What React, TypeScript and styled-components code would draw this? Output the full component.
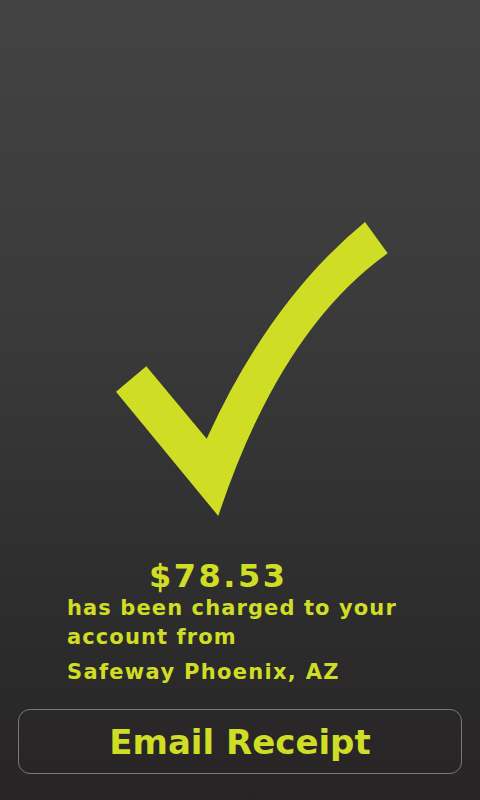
import React from "react";
import styled, { createGlobalStyle } from "styled-components";

const Global = createGlobalStyle`
  html, body { margin: 0; padding: 0; }
  body { background: #262425; }
`;

const Page = styled.div`
  width: 480px;
  height: 800px;
  box-sizing: border-box;
  padding-top: 222px;
  display: flex;
  flex-direction: column;
  background: linear-gradient(180deg, #434343 0%, #3a3a3a 40%, #262425 100%);
  color: #cfdd24;
`;

const CheckIcon = styled.svg`
  display: block;
  width: 272px;
  height: 294px;
  margin-left: 116px;
  flex: none;
`;

const Amount = styled.div`
  margin: 42px 0 0 149px;
  font-family: "DejaVu Sans", "Liberation Sans", sans-serif;
  font-weight: bold;
  font-size: 32px;
  line-height: 36px;
  letter-spacing: 2.5px;
`;

const Details = styled.div`
  margin-left: 67px;
  font-family: "DejaVu Sans", "Liberation Sans", sans-serif;
  font-weight: bold;
  font-size: 21px;
  line-height: 29px;
  letter-spacing: 1.1px;
`;

const Merchant = styled.div`
  margin: 6px 0 0 67px;
  font-family: "DejaVu Sans", "Liberation Sans", sans-serif;
  font-weight: bold;
  font-size: 21px;
  line-height: 29px;
  letter-spacing: 1.3px;
`;

const Button = styled.button`
  margin: 22px 18px 0 18px;
  height: 65px;
  box-sizing: border-box;
  border: 1px solid #7a7879;
  border-radius: 12px;
  background: transparent;
  color: #cfdd24;
  font-family: "DejaVu Sans", "Liberation Sans", sans-serif;
  font-weight: bold;
  font-size: 34px;
  display: flex;
  align-items: center;
  justify-content: center;
  padding: 0;
`;

export default function App() {
  return (
    <>
      <Global />
      <Page>
        <CheckIcon viewBox="116 222 272 294">
          <path
            d="M116 391.7 L146.3 366.3 L206.7 438.7 Q270 300 365 222 L387.7 253.3 Q280 330 218.3 516 Z"
            fill="#cfdd24"
          />
        </CheckIcon>
        <Amount>$78.53</Amount>
        <Details>
          has been charged to your
          <br />
          account from
        </Details>
        <Merchant>Safeway Phoenix, AZ</Merchant>
        <Button>Email Receipt</Button>
      </Page>
    </>
  );
}
